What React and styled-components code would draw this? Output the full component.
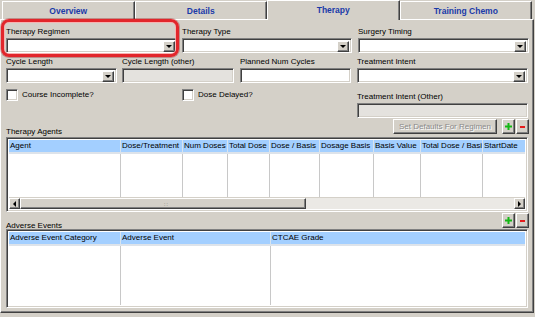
import React from "react";
import styled, { createGlobalStyle, css } from "styled-components";

const GlobalStyle = createGlobalStyle`
  html, body {
    margin: 0;
    padding: 0;
    background: #d4d0c8;
  }
  body {
    font-family: "Liberation Sans", Arial, sans-serif;
    font-size: 8px;
    color: #000;
  }
`;

const raised = css`
  border-top: 1px solid #fff;
  border-left: 1px solid #fff;
  border-right: 1px solid #404040;
  border-bottom: 1px solid #404040;
  box-shadow: inset -1px -1px 0 #808080;
`;

const sunken = css`
  border-top: 1px solid #808080;
  border-left: 1px solid #808080;
  border-right: 1px solid #fff;
  border-bottom: 1px solid #fff;
  box-shadow: inset 1px 1px 0 #404040, inset -1px -1px 0 #d4d0c8;
`;

const Window = styled.div`
  position: relative;
  width: 535px;
  height: 317px;
  box-sizing: border-box;
  padding: 0 1px 4px 0;
  display: flex;
  flex-direction: column;
  background: #d4d0c8;
`;

const TabBar = styled.div`
  display: flex;
  height: 19px;
  padding: 0 2px 0 2px;
  position: relative;
  z-index: 1;
`;

const Tab = styled.div`
  flex: 1;
  box-sizing: border-box;
  height: 18px;
  margin-top: 1px;
  border-top: 1px solid #fff;
  border-left: 1px solid #fff;
  border-right: 1px solid #404040;
  box-shadow: inset -1px 0 0 #808080;
  display: flex;
  align-items: center;
  justify-content: center;
  font-weight: bold;
  font-size: 8.5px;
  color: #1a3aa8;
  background: #d4d0c8;
  ${(p) =>
    p.active &&
    css`
      height: 20px;
      margin-top: 0;
      padding-bottom: 1px;
    `}
`;

const Panel = styled.div`
  flex: 1;
  box-sizing: border-box;
  border-top: 1px solid #fff;
  border-left: 1px solid #fff;
  border-right: 1px solid #404040;
  border-bottom: 1px solid #404040;
  box-shadow: inset -1px -1px 0 #808080;
  padding: 7px 4px 0 5px;
  display: flex;
  flex-direction: column;
`;

const Row = styled.div`
  display: flex;
  align-items: flex-start;
  margin-bottom: ${(p) => p.mb || 0}px;
`;

const Field = styled.div`
  width: ${(p) => p.w}px;
  margin-right: ${(p) => p.mr || 0}px;
  margin-top: ${(p) => p.mt || 0}px;
  display: flex;
  flex-direction: column;
`;

const Label = styled.div`
  height: 11px;
  line-height: 9px;
  white-space: nowrap;
  color: #000;
`;

const InputBox = styled.div`
  box-sizing: border-box;
  height: 15px;
  background: ${(p) => (p.disabled ? "#e4e2de" : "#fff")};
  ${sunken};
  position: relative;
`;

const DropButton = styled.div`
  position: absolute;
  right: 2px;
  top: 2px;
  width: 12px;
  height: 11px;
  box-sizing: border-box;
  background: #d4d0c8;
  ${raised};
  display: flex;
  align-items: center;
  justify-content: center;
`;

const Arrow = styled.div`
  width: 0;
  height: 0;
  border-left: 3px solid transparent;
  border-right: 3px solid transparent;
  border-top: 3px solid #000;
`;

const Combo = ({ w }) => (
  <InputBox style={{ width: w }}>
    <DropButton>
      <Arrow />
    </DropButton>
  </InputBox>
);

const CheckItem = styled.label`
  display: flex;
  align-items: center;
  width: ${(p) => p.w}px;
  height: 13px;
  margin-top: 4px;
  white-space: nowrap;
`;

const CheckBox = styled.span`
  box-sizing: border-box;
  width: 12px;
  height: 12px;
  margin-right: 4px;
  background: #fff;
  ${sunken};
`;

const SectionHead = styled.div`
  display: flex;
  align-items: flex-end;
  height: 15px;
  margin-bottom: ${(p) => p.mb}px;
`;

const SectionTitle = styled.div`
  flex: 1;
  line-height: 9px;
  margin-bottom: -2px;
`;

const Button = styled.button`
  box-sizing: border-box;
  height: 15px;
  width: ${(p) => p.w}px;
  margin-left: ${(p) => p.ml || 0}px;
  padding: 0;
  background: #d4d0c8;
  ${raised};
  font-family: "Liberation Sans", Arial, sans-serif;
  font-size: 8px;
  white-space: nowrap;
  color: ${(p) => (p.disabled ? "#8a8a8a" : "#000")};
  text-shadow: ${(p) => (p.disabled ? "1px 1px 0 #fff" : "none")};
  display: flex;
  align-items: center;
  justify-content: center;
`;

const Table = styled.div`
  box-sizing: border-box;
  height: ${(p) => p.h}px;
  margin-bottom: ${(p) => p.mb || 0}px;
  margin-right: 1px;
  ${sunken};
  padding: 2px;
  background: #fff;
  display: flex;
  flex-direction: column;
`;

const Grid = styled.div`
  display: grid;
  grid-template-columns: ${(p) => p.cols};
`;

const HeadCell = styled.div`
  height: 12px;
  line-height: 12px;
  padding-left: 1px;
  background: #a3cfff;
  border-right: 1px solid #d8e4ee;
  border-bottom: 2px solid #dde3ea;
  white-space: nowrap;
  overflow: hidden;
  &:last-child {
    border-right: none;
  }
`;

const Body = styled(Grid)`
  flex: 1;
`;

const BodyCell = styled.div`
  border-right: 1px solid #c8c8c8;
  &:last-child {
    border-right: none;
  }
`;

const ScrollBar = styled.div`
  height: 11px;
  display: flex;
  background: #ebe9e5;
  border-top: 1px solid #d4d0c8;
`;

const ScrollBtn = styled.div`
  box-sizing: border-box;
  width: 11px;
  height: 11px;
  background: #d4d0c8;
  ${raised};
  display: flex;
  align-items: center;
  justify-content: center;
`;

const SideArrow = styled.div`
  width: 0;
  height: 0;
  border-top: 3px solid transparent;
  border-bottom: 3px solid transparent;
  ${(p) =>
    p.dir === "left"
      ? css`border-right: 3px solid #000;`
      : css`border-left: 3px solid #000;`}
`;

const Thumb = styled.div`
  box-sizing: border-box;
  width: ${(p) => p.w}px;
  height: 11px;
  background: #d4d0c8;
  ${raised};
  display: flex;
  align-items: center;
  justify-content: flex-end;
  padding-right: ${(p) => p.w / 2 - 6}px;
  color: #a8a49c;
  font-size: 6px;
`;

const Track = styled.div`
  flex: 1;
`;

const Highlight = styled.div`
  position: absolute;
  left: 1px;
  top: 19px;
  width: 178px;
  height: 38px;
  box-sizing: border-box;
  border: 3px solid #e2262b;
  border-radius: 8px;
  box-shadow: 0 0 0 1px rgba(150, 20, 20, 0.35),
    inset 0 0 0 1px rgba(255, 170, 170, 0.8);
  pointer-events: none;
  z-index: 2;
`;

const PlusIcon = () => (
  <svg width="7" height="7" viewBox="0 0 7 7">
    <rect x="2.5" y="0" width="2" height="7" fill="#14b814" />
    <rect x="0" y="2.5" width="7" height="2" fill="#14b814" />
  </svg>
);

const MinusIcon = () => (
  <svg width="5" height="2" viewBox="0 0 5 2">
    <rect x="0" y="0" width="5" height="2" fill="#e41c1c" />
  </svg>
);

const agentCols = "112px 62px 45px 42px 50px 54px 47px 62px 1fr";
const agentHeads = [
  "Agent",
  "Dose/Treatment",
  "Num Doses",
  "Total Dose",
  "Dose / Basis",
  "Dosage Basis",
  "Basis Value",
  "Total Dose / Basis",
  "StartDate",
];

const eventCols = "112px 150px 1fr";
const eventHeads = ["Adverse Event Category", "Adverse Event", "CTCAE Grade"];

const DataTable = ({ cols, heads, h, mb, scroll }) => (
  <Table h={h} mb={mb}>
    <Grid cols={cols}>
      {heads.map((t) => (
        <HeadCell key={t}>{t}</HeadCell>
      ))}
    </Grid>
    <Body cols={cols}>
      {heads.map((t) => (
        <BodyCell key={t} />
      ))}
    </Body>
    {scroll && (
      <ScrollBar>
        <ScrollBtn>
          <SideArrow dir="left" />
        </ScrollBtn>
        <Thumb w={286}>∷</Thumb>
        <Track />
        <ScrollBtn>
          <SideArrow dir="right" />
        </ScrollBtn>
      </ScrollBar>
    )}
  </Table>
);

export default function App() {
  return (
    <>
      <GlobalStyle />
      <Window>
        <TabBar>
          <Tab>Overview</Tab>
          <Tab>Details</Tab>
          <Tab active>Therapy</Tab>
          <Tab>Training Chemo</Tab>
        </TabBar>
        <Panel>
          <Row mb={4}>
            <Field w={172} mr={4}>
              <Label>Therapy Regimen</Label>
              <Combo w={172} />
            </Field>
            <Field w={170} mr={6}>
              <Label>Therapy Type</Label>
              <Combo w={170} />
            </Field>
            <Field w={171}>
              <Label>Surgery Timing</Label>
              <Combo w={171} />
            </Field>
          </Row>
          <Row mb={1}>
            <Field w={111} mr={5}>
              <Label>Cycle Length</Label>
              <Combo w={111} />
            </Field>
            <Field w={112} mr={6}>
              <Label>Cycle Length (other)</Label>
              <InputBox disabled />
            </Field>
            <Field w={111} mr={6}>
              <Label>Planned Num Cycles</Label>
              <InputBox />
            </Field>
            <Field w={171}>
              <Label>Treatment Intent</Label>
              <Combo w={171} />
            </Field>
          </Row>
          <Row mb={1}>
            <CheckItem w={176}>
              <CheckBox />
              Course Incomplete?
            </CheckItem>
            <CheckItem w={175}>
              <CheckBox />
              Dose Delayed?
            </CheckItem>
            <Field w={171} mt={8}>
              <Label>Treatment Intent (Other)</Label>
              <InputBox disabled />
            </Field>
          </Row>
          <SectionHead mb={3}>
            <SectionTitle>Therapy Agents</SectionTitle>
            <Button w={104} disabled>
              Set Defaults For Regimen
            </Button>
            <Button w={13} ml={5}>
              <PlusIcon />
            </Button>
            <Button w={13} ml={1}>
              <MinusIcon />
            </Button>
          </SectionHead>
          <DataTable cols={agentCols} heads={agentHeads} h={75} mb={1} scroll />
          <SectionHead mb={1}>
            <SectionTitle>Adverse Events</SectionTitle>
            <Button w={13}>
              <PlusIcon />
            </Button>
            <Button w={13} ml={1}>
              <MinusIcon />
            </Button>
          </SectionHead>
          <DataTable cols={eventCols} heads={eventHeads} h={79} />
        </Panel>
        <Highlight />
      </Window>
    </>
  );
}
